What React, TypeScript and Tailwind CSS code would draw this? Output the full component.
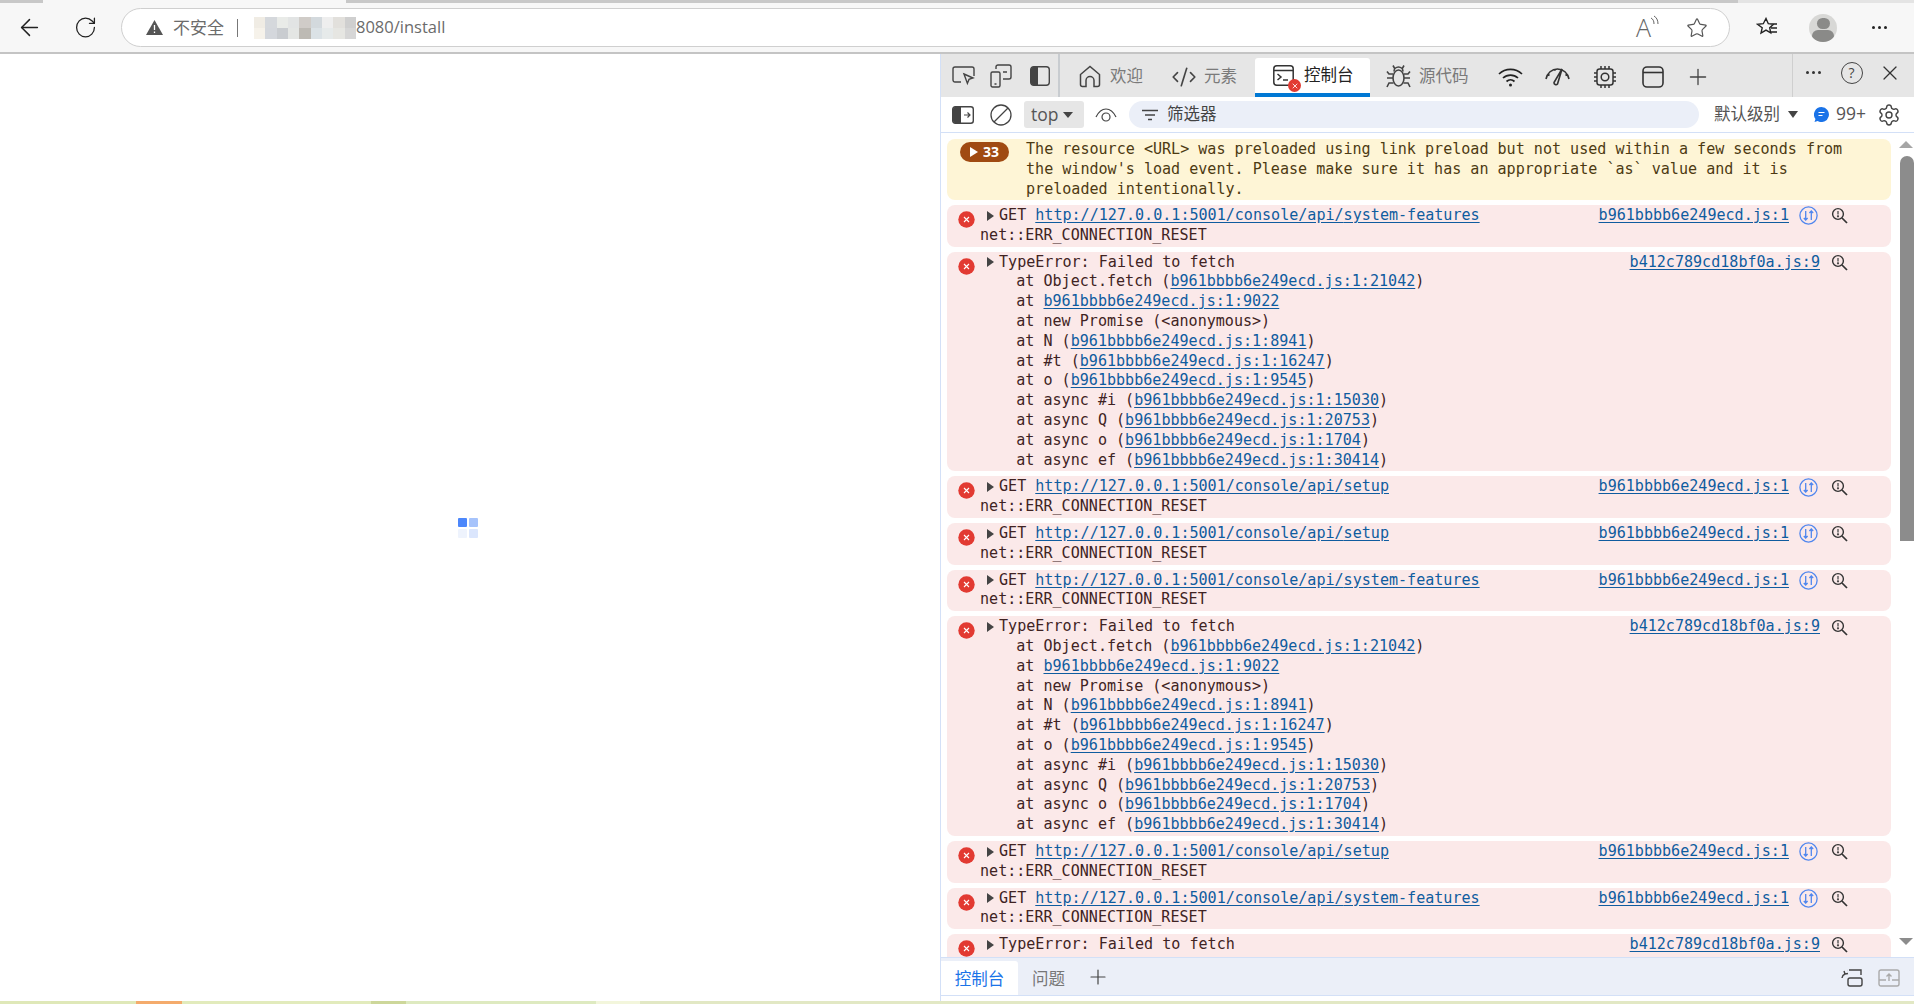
import type { ReactNode } from "react";
import { ArrowLeft, CodeXml, Plus, RotateCw, Settings, Star, X } from "lucide-react";

const CJK = "font-['Open_Sans','Noto_Sans_CJK_SC',sans-serif]";
const MOSAIC = [
  ["#f0ece4", "#d5d8dc", "#e9ebe8", "#e2e4e4", "#d0ccc8", "#d3d9dd", "#eeeeee", "#e2e0dc", "#cfcfcf"],
  ["#f6f2ea", "#d4d7dc", "#c9ccd0", "#e4e6e4", "#bdbab4", "#dbe2e6", "#e6eaea", "#e6e6e2", "#d6d6d6"],
];
const STACK: [string, string, string?][] = [
  ["at Object.fetch (", "b961bbbb6e249ecd.js:1:21042", ")"],
  ["at ", "b961bbbb6e249ecd.js:1:9022"],
  ["at new Promise (<anonymous>)", ""],
  ["at N (", "b961bbbb6e249ecd.js:1:8941", ")"],
  ["at #t (", "b961bbbb6e249ecd.js:1:16247", ")"],
  ["at o (", "b961bbbb6e249ecd.js:1:9545", ")"],
  ["at async #i (", "b961bbbb6e249ecd.js:1:15030", ")"],
  ["at async Q (", "b961bbbb6e249ecd.js:1:20753", ")"],
  ["at async o (", "b961bbbb6e249ecd.js:1:1704", ")"],
  ["at async ef (", "b961bbbb6e249ecd.js:1:30414", ")"],
];
const STRIP = [
  ["w-[136px]", "bg-[#dfe8b8]"],
  ["w-[46px]", "bg-[#f4ab6c]"],
  ["w-[189px]", "bg-[#e2ebbc]"],
  ["w-[35px]", "bg-[#cdd79a]"],
  ["w-[190px]", "bg-[#deeac0]"],
  ["w-[44px]", "bg-[#f3f6dc]"],
  ["w-[1274px]", "bg-[#e2e8c4]"],
];

function Link({ children }: { children: ReactNode }) {
  return <span className="text-[#0f5c9f] underline underline-offset-2">{children}</span>;
}

function ErrorIcon() {
  return (
    <svg width="17" height="17" viewBox="0 0 17 17" className="shrink-0 mt-[5px]">
      <circle cx="8.5" cy="8.5" r="8.2" fill="#e23a32" />
      <path d="M6 6l5 5M11 6l-5 5" stroke="#fff" strokeWidth="1.1" />
    </svg>
  );
}

function Caret() {
  return <span className="inline-block w-0 h-0 border-y-[5px] border-y-transparent border-l-[7px] border-l-[#444]" />;
}

function MagnifyIcon() {
  return (
    <svg width="17" height="17" viewBox="0 0 17 17" fill="none" stroke="#333" strokeWidth="1.4">
      <circle cx="7" cy="7" r="5.4" />
      <path d="M11 11l5 5" strokeWidth="1.7" />
      <path d="M7 4v3.4" stroke="#555" />
      <circle cx="7" cy="9.3" r=".4" />
    </svg>
  );
}

function TransferIcon() {
  return (
    <svg width="19" height="19" viewBox="0 0 19 19" fill="none" stroke="#4f86ee" strokeWidth="1.3" className="ml-[10px]">
      <circle cx="9.5" cy="9.5" r="8.6" />
      <path d="M6.7 5v9M4.8 12l1.9 2 1.900-2M12.300 14V5M10.400 7l1.900-2 1.900 2" />
    </svg>
  );
}

function Row({ head, source, transfer, children }: { head: ReactNode; source: string; transfer?: boolean; children: ReactNode }) {
  return (
    <div className="flex shrink-0 rounded-[8px] bg-[#fbe9e9] pl-[11px] py-[1px] text-[#3f2323] whitespace-pre">
      <div className="w-[22px] shrink-0"><ErrorIcon /></div>
      <div className="flex-1 min-w-0">
        <div className="flex items-center h-[19.8px]">
          <span className="ml-[7px] mr-[5px] flex"><Caret /></span>
          <span className="flex-1 min-w-0">{head}</span>
          <Link>{source}</Link>
          {transfer ? <TransferIcon /> : null}
          <span className={transfer ? "ml-[13px] mr-[43px] flex" : "ml-[11px] mr-[43px] flex"}><MagnifyIcon /></span>
        </div>
        {children}
      </div>
    </div>
  );
}

function NetRow({ path }: { path: string }) {
  return (
    <Row
      source="b961bbbb6e249ecd.js:1"
      transfer
      head={<>GET <Link>http://127.0.0.1:5001/console/api/{path}</Link></>}
    >
      <div className="h-[19.8px]">net::ERR_CONNECTION_RESET</div>
    </Row>
  );
}

function FetchRow({ lines = STACK.length }: { lines?: number }) {
  return (
    <Row source="b412c789cd18bf0a.js:9" head="TypeError: Failed to fetch">
      {STACK.slice(0, lines).map(([before, link, after], i) => (
        <div key={i} className="h-[19.8px]">
          {"    " + before}
          {link ? <Link>{link}</Link> : null}
          {after}
        </div>
      ))}
    </Row>
  );
}

function DevTabs() {
  return (
    <div className="flex h-[43px] pt-[2px] bg-[#e6e6e6] items-center shrink-0 text-[16.5px] text-[#7a7a7a]">
      <div className="flex items-center -mt-[2px] h-[43px] w-[119px] border-r-2 border-[#c8ccd0] pl-[11px] gap-[15px]">
        <svg width="24" height="22" viewBox="0 0 24 22" fill="none" stroke="#444" strokeWidth="1.4">
          <path d="M9 17H3a2 2 0 0 1-2-2V4a2 2 0 0 1 2-2h17a2 2 0 0 1 2 2v7" />
          <path d="M12 9l9 4-4 1.400-1.600 4z" />
        </svg>
        <svg width="22" height="24" viewBox="0 0 22 24" fill="none" stroke="#444" strokeWidth="1.4" className="-ml-[1px]">
          <rect x="1" y="8" width="9" height="15" rx="1.5" />
          <path d="M6 5V3a2 2 0 0 1 2-2h11a2 2 0 0 1 2 2v10a2 2 0 0 1-2 2h-6M13 8h4M4.500 20h2" />
        </svg>
        <svg width="20" height="20" viewBox="0 0 20 20" className="ml-[3px]">
          <rect x=".7" y=".7" width="18.6" height="18.6" rx="3" fill="none" stroke="#444" strokeWidth="1.4" />
          <path d="M3.500 1H8v18H3.500A2.500 2.500 0 0 1 1 16.500v-13A2.500 2.500 0 0 1 3.500 1z" fill="#444" />
        </svg>
      </div>
      <svg width="22" height="23" viewBox="0 0 22 23" fill="none" stroke="#444" strokeWidth="1.5" className="ml-[19px]">
        <path d="M7 21.500H3.500a2 2 0 0 1-2-2V9.500L11 1.500l9.500 8v10a2 2 0 0 1-2 2H15v-6a4 4 0 0 0-8 0z" />
      </svg>
      <span className={`${CJK} ml-[9px]`}>欢迎</span>
      <CodeXml size={26} strokeWidth={1.5} color="#444" className="ml-[28px]" />
      <span className={`${CJK} ml-[7px]`}>元素</span>
      <div className="relative flex items-center ml-[18px] w-[115px] h-[39px] mt-[2px] bg-white rounded-t-[3px] border-b-4 border-[#0078d4] text-[#222]">
        <svg width="21" height="21" viewBox="0 0 21 21" fill="none" stroke="#333" strokeWidth="1.5" className="ml-[18px]">
          <rect x=".8" y=".8" width="19.400" height="19.400" rx="3" />
          <path d="M1 5.500h19M4.500 9l3.500 3-3.500 3M10 15h5" />
        </svg>
        <span className="absolute left-[33px] top-[21px] w-[13px] h-[13px] rounded-full bg-[#e23a32] text-white flex items-center justify-center">
          <X size={8} strokeWidth={2.5} />
        </span>
        <span className={`${CJK} ml-[10px]`}>控制台</span>
      </div>
      <svg width="25" height="25" viewBox="0 0 25 25" fill="none" stroke="#444" strokeWidth="1.6" className="ml-[16px]">
        <ellipse cx="12.500" cy="14" rx="5.500" ry="8" />
        <path d="M8 7.500a4.500 4.500 0 0 1 9 0M7 1.500L9 5M18 1.500L16 5M1 7.500l2 2.500h4M24 7.500L22 10h-4M1 14h6M24 14h-6M1 23l2-4h4.500M24 23l-2-4h-4.500" />
      </svg>
      <span className={`${CJK} ml-[8px]`}>源代码</span>
      <svg width="25" height="20" viewBox="0 0 25 20" fill="none" stroke="#222" strokeWidth="1.7" className="ml-[29px]">
        <path d="M1 7a16.500 16.500 0 0 1 23 0M5 11a11 11 0 0 1 15 0M8.500 14.500a6 6 0 0 1 8 0" />
        <circle cx="12.500" cy="18" r="1.500" fill="#222" stroke="none" />
      </svg>
      <svg width="27" height="22" viewBox="0 0 27 22" fill="none" stroke="#333" strokeWidth="1.6" className="ml-[21px]">
        <path d="M2 13C3 7 8 3 13.500 3S24 7 25 13M3.500 8l2 1.500M23.500 8l-2 1.500M11 3v2" />
        <path d="M18 3l-4.500 15a2 2 0 0 1-3.500-1.500z" />
      </svg>
      <svg width="24" height="24" viewBox="0 0 24 24" fill="none" stroke="#333" strokeWidth="1.5" className="ml-[22px]">
        <rect x="4" y="4" width="16" height="16" rx="2.500" />
        <circle cx="12" cy="12" r="3.800" />
        <path d="M8 1v3M12 1v3M16 1v3M8 20v3M12 20v3M16 20v3M1 8h3M1 12h3M1 16h3M20 8h3M20 12h3M20 16h3" />
      </svg>
      <svg width="22" height="22" viewBox="0 0 22 22" fill="none" stroke="#333" strokeWidth="1.6" className="ml-[25px]">
        <rect x="1" y="1" width="20" height="20" rx="4" />
        <path d="M1 6.500h20" />
      </svg>
      <Plus size={26} strokeWidth={1.2} color="#444" className="ml-[21px]" />
      <div className="ml-[81px] -mt-[2px] h-[43px] w-[1px] bg-[#cfcfcf]" />
      <div className="flex items-center gap-[3px] ml-[13px] -mt-[8px]">
        <span className="w-[3px] h-[3px] bg-[#333] rounded-full" />
        <span className="w-[3px] h-[3px] bg-[#333] rounded-full" />
        <span className="w-[3px] h-[3px] bg-[#333] rounded-full" />
      </div>
      <span className="ml-[20px] -mt-[8px] flex items-center justify-center w-[22px] h-[22px] rounded-full border border-[#444] text-[14px] text-[#444] font-['Open_Sans',sans-serif]">?</span>
      <X size={24} strokeWidth={1.2} color="#333" className="ml-[15px] -mt-[8px]" />
    </div>
  );
}

function ConsoleBar() {
  return (
    <div className="flex h-[36px] items-center shrink-0 border-b border-[#d3e0f7] text-[16.5px] text-[#555]">
      <svg width="22" height="18" viewBox="0 0 22 18" className="ml-[11px]">
        <rect x=".7" y=".7" width="20.600" height="16.600" rx="2.500" fill="none" stroke="#444" strokeWidth="1.4" />
        <path d="M3 1h6v16H3a2 2 0 0 1-2-2V3a2 2 0 0 1 2-2z" fill="#444" />
        <path d="M12 9h6M15.500 6.500L18 9l-2.500 2.500" fill="none" stroke="#444" strokeWidth="1.2" />
      </svg>
      <svg width="22" height="22" viewBox="0 0 22 22" fill="none" stroke="#444" strokeWidth="1.3" className="ml-[16px]">
        <circle cx="11" cy="11" r="10" />
        <path d="M4 18L18 4" />
      </svg>
      <div className="ml-[12px] w-[60px] h-[27px] rounded-[3px] bg-[#e6e6e6] flex items-center pl-[7px] gap-[5px] text-[17.5px] font-['Open_Sans',sans-serif] text-[#555]">
        top
        <span className="w-0 h-0 border-x-[5px] border-x-transparent border-t-[6px] border-t-[#444]" />
      </div>
      <svg width="22" height="14" viewBox="0 0 22 14" fill="none" stroke="#444" strokeWidth="1.2" className="ml-[11px]">
        <path d="M1 9c2.500-5 6-8 10-8s7.500 3 10 8" />
        <circle cx="11" cy="9" r="4" />
      </svg>
      <div className={`${CJK} ml-[12px] w-[570px] h-[27px] rounded-full bg-[#ebeff8] flex items-center pl-[13px] gap-[9px] text-[#444]`}>
        <svg width="16" height="12" viewBox="0 0 16 12" stroke="#444" strokeWidth="1.4">
          <path d="M0 1.500h16M3 6h10M6 10.500h4" />
        </svg>
        筛选器
      </div>
      <span className={`${CJK} ml-[15px]`}>默认级别</span>
      <span className="ml-[8px] w-0 h-0 border-x-[5px] border-x-transparent border-t-[7px] border-t-[#444]" />
      <svg width="15" height="15" viewBox="0 0 15 15" className="ml-[16px]">
        <path d="M7.500 0a7.500 7.500 0 1 1-3.800 14L.5 15l1-3A7.500 7.500 0 0 1 7.500 0z" fill="#1a73e8" />
        <path d="M4.500 5.500h6M4.500 8.500h4" stroke="#fff" strokeWidth="1.100" />
      </svg>
      <span className="ml-[7px] font-['Open_Sans',sans-serif] text-[17.5px] -mt-[3px]">99+</span>
      <Settings size={24} strokeWidth={1.4} color="#444" className="ml-[11px]" />
    </div>
  );
}

function ConsoleList() {
  return (
    <div className="flex-1 min-h-0 flex overflow-hidden font-['DejaVu_Sans_Mono',monospace] text-[15.07px] leading-[19.8px]">
      <div className="flex-1 min-w-0 flex flex-col gap-[5px] pt-[6px] pl-[6px] pr-[3px]">
        <div className="flex shrink-0 rounded-[8px] bg-[#fef5d6] py-[1px] h-[61px] text-[#4d3a12] whitespace-pre">
          <div className="ml-[13px] mt-[2px] w-[49px] h-[20px] rounded-full bg-[#a04a12] flex items-center justify-center gap-[5px] text-white text-[14px] font-bold font-['Open_Sans',sans-serif]">
            <span className="w-0 h-0 border-y-[5px] border-y-transparent border-l-[8px] border-l-white" />
            33
          </div>
          <div className="ml-[17px]">
            {"The resource <URL> was preloaded using link preload but not used within a few seconds from\nthe window's load event. Please make sure it has an appropriate `as` value and it is\npreloaded intentionally."}
          </div>
        </div>
        <NetRow path="system-features" />
        <FetchRow />
        <NetRow path="setup" />
        <NetRow path="setup" />
        <NetRow path="system-features" />
        <FetchRow />
        <NetRow path="setup" />
        <NetRow path="system-features" />
        <FetchRow lines={1} />
      </div>
      <div className="w-[20px] shrink-0 flex flex-col items-end">
        <span className="mt-[8px] mr-[1px] w-0 h-0 border-x-[7px] border-x-transparent border-b-[7px] border-b-[#a6a6a6]" />
        <div className="mt-[8px] w-[14px] h-[385px] bg-[#8c8c8c] rounded-t-[7px]" />
        <span className="mt-[397px] mr-[1px] w-0 h-0 border-x-[7px] border-x-transparent border-t-[7px] border-t-[#8c8c8c]" />
      </div>
    </div>
  );
}

export default function App() {
  return (
    <div className="w-[1914px] h-[1004px] overflow-hidden flex flex-col bg-white">
      {/* tab strip edge */}
      <div className="flex h-[3px] shrink-0">
        <div className="w-[43px] bg-[#c8c8c8]" />
        <div className="w-[303px] bg-[#f7f7f7]" />
        <div className="w-[1392px] bg-[#c8c8c8]" />
        <div className="flex-1 bg-[#e4e4e4]" />
      </div>

      {/* browser toolbar */}
      <div className="flex items-center h-[51px] shrink-0 bg-[#f7f7f7] border-b-2 border-[#c4c4c4]">
        <ArrowLeft size={27} strokeWidth={1.3} color="#222" className="ml-[16px]" />
        <RotateCw size={25} strokeWidth={1.3} color="#222" className="ml-[30px] scale-x-[0.95]" />
        <div className="ml-[23px] w-[1609px] h-[39px] rounded-full bg-white border border-[#cfcfcf] flex items-center">
          <svg width="17" height="15" viewBox="0 0 17 15" className="ml-[24px]">
            <path d="M8.500 0L17 15H0z" fill="#555" />
            <path d="M8.500 5v5M8.500 11.500v1.500" stroke="#fff" strokeWidth="1.300" />
          </svg>
          <span className={`${CJK} ml-[10px] text-[17px] text-[#6b6b6b]`}>不安全</span>
          <span className="ml-[13px] w-[1px] h-[18px] bg-[#777]" />
          <div className="ml-[16px] w-[102px] blur-[0.6px]">
            {MOSAIC.map((cells, i) => (
              <div key={i} className="flex">
                {cells.map((c, j) => (
                  <span key={j} className="w-[11.330px] h-[11px]" style={{ backgroundColor: c }} />
                ))}
              </div>
            ))}
          </div>
          <span className="font-['Open_Sans',sans-serif] text-[16.500px] text-[#6b6b6b]">8080/install</span>
          <span className="flex-1" />
          <span className="relative font-['Open_Sans',sans-serif] font-light text-[25px] leading-none text-[#666] mr-[30px] w-[20px]">
            A
            <svg width="9" height="12" viewBox="0 0 9 12" fill="none" stroke="#666" strokeWidth="1" className="absolute top-[0px] left-[14px]">
              <path d="M1 3c2 1 3 3 3 6M4 1c2.500 1.500 4 4 4 8" />
            </svg>
          </span>
          <Star size={22} strokeWidth={1.3} color="#555" className="mr-[21px]" />
        </div>
        <svg width="21" height="21" viewBox="0 0 21 21" fill="none" stroke="#222" strokeWidth="1.400" className="ml-[26px]">
          <path d="M10 1.500l2.300 5.200 5.200.5-3.800 3.600 1 5-4.700-2.700L5 16l1.200-5.200L1.500 7.200l5.800-.5zM14 7h7M15 11h6M14 15h7" />
        </svg>
        <div className="ml-[32px] w-[28px] h-[28px] rounded-full bg-[#d8d8d6] flex flex-col items-center overflow-hidden">
          <span className="mt-[4px] w-[13px] h-[13px] rounded-full bg-[#8a8a88]" />
          <span className="mt-[1px] w-[22px] h-[14px] rounded-full bg-[#8a8a88]" />
        </div>
        <div className="ml-[35px] flex gap-[3px]">
          <span className="w-[3px] h-[3px] bg-[#222] rounded-full" />
          <span className="w-[3px] h-[3px] bg-[#222] rounded-full" />
          <span className="w-[3px] h-[3px] bg-[#222] rounded-full" />
        </div>
      </div>

      <div className="flex flex-1 min-h-0">
        {/* page */}
        <div className="w-[940px] shrink-0 flex items-center justify-center pr-[4px]">
          <div className="grid grid-cols-2 gap-[2px]">
            <span className="w-[9px] h-[9px] rounded-[1px] bg-[#4c87fb]" />
            <span className="w-[9px] h-[9px] rounded-[1px] bg-[#a6c3fb]" />
            <span className="w-[9px] h-[9px] rounded-[1px] bg-[#eef3fd]" />
            <span className="w-[9px] h-[9px] rounded-[1px] bg-[#dbe6fd]" />
          </div>
        </div>

        {/* devtools */}
        <div className="flex-1 min-w-0 flex flex-col border-l border-[#d3e0f7]">
          <DevTabs />
          <ConsoleBar />
          <ConsoleList />
          <div className="flex h-[39px] shrink-0 items-end bg-[#ebeff8] border-y border-[#d3e0f7]">
            <div className={`${CJK} w-[77px] h-[34px] pt-[3px] bg-white rounded-tr-[3px] flex items-center justify-center text-[16.5px] text-[#1a73e8]`}>控制台</div>
            <span className={`${CJK} ml-[14px] h-[34px] pt-[3px] flex items-center text-[16.5px] text-[#777]`}>问题</span>
            <Plus size={24} strokeWidth={1.2} color="#444" className="ml-[21px] mb-[6px]" />
            <span className="flex-1" />
            <svg width="23" height="18" viewBox="0 0 23 18" fill="none" stroke="#444" strokeWidth="1.400" className="mb-[8px]">
              <path d="M9 1h12v5M7 1.500h.1M2 9a5 5 0 0 1 3-4M5 5l-1-3M5 5l3-.5" />
              <rect x="8" y="9" width="14" height="8" rx="2" />
            </svg>
            <svg width="22" height="18" viewBox="0 0 22 18" fill="none" stroke="#aaa" strokeWidth="1.400" className="ml-[15px] mr-[14px] mb-[8px]">
              <rect x="1" y="1" width="20" height="16" rx="2" />
              <path d="M1 11h7M14 11h7M11 12V5M8.500 7.500L11 5l2.500 2.500" />
            </svg>
          </div>
          <div className="h-[5px] shrink-0" />
        </div>
      </div>

      <div className="flex h-[3px] shrink-0">
        {STRIP.map(([w, c], i) => (
          <div key={i} className={`${w} ${c}`} />
        ))}
      </div>
    </div>
  );
}
